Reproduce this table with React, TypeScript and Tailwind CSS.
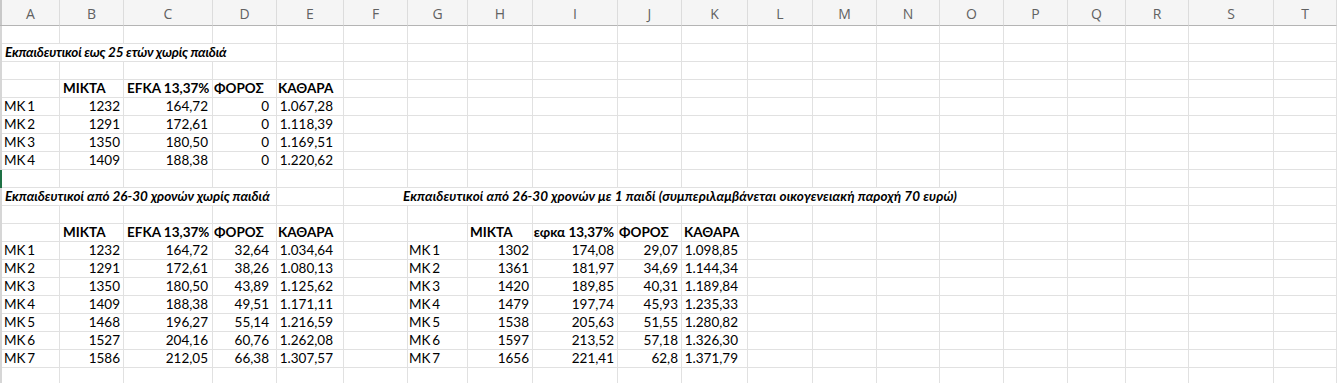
import React from 'react'

type Cell = { span?: number; text?: string; cls?: string }

const letters = ['A', 'B', 'C', 'D', 'E', 'F', 'G', 'H', 'I', 'J', 'K', 'L', 'M', 'N', 'O', 'P', 'Q', 'R', 'S', 'T']

const sec1 = [
  ['ΜΚ\u20091', '1232', '164,72', '0', '1.067,28'],
  ['ΜΚ\u20092', '1291', '172,61', '0', '1.118,39'],
  ['ΜΚ\u20093', '1350', '180,50', '0', '1.169,51'],
  ['ΜΚ\u20094', '1409', '188,38', '0', '1.220,62'],
]

const sec2 = [
  ['ΜΚ\u20091', '1232', '164,72', '32,64', '1.034,64'],
  ['ΜΚ\u20092', '1291', '172,61', '38,26', '1.080,13'],
  ['ΜΚ\u20093', '1350', '180,50', '43,89', '1.125,62'],
  ['ΜΚ\u20094', '1409', '188,38', '49,51', '1.171,11'],
  ['ΜΚ\u20095', '1468', '196,27', '55,14', '1.216,59'],
  ['ΜΚ\u20096', '1527', '204,16', '60,76', '1.262,08'],
  ['ΜΚ\u20097', '1586', '212,05', '66,38', '1.307,57'],
]

const sec3 = [
  ['ΜΚ\u20091', '1302', '174,08', '29,07', '1.098,85'],
  ['ΜΚ\u20092', '1361', '181,97', '34,69', '1.144,34'],
  ['ΜΚ\u20093', '1420', '189,85', '40,31', '1.189,84'],
  ['ΜΚ\u20094', '1479', '197,74', '45,93', '1.235,33'],
  ['ΜΚ\u20095', '1538', '205,63', '51,55', '1.280,82'],
  ['ΜΚ\u20096', '1597', '213,52', '57,18', '1.326,30'],
  ['ΜΚ\u20097', '1656', '221,41', '62,8', '1.371,79'],
]

// right padding per column so the numbers land where excel put them
const leftNums = ['pl-[2px]', 'pr-[3px]', 'pr-[4px]', 'pr-[7px]', 'pr-[10px]']
const rightNums = ['pl-[1px]', 'pr-[3px]', 'pr-[3px]', 'pr-[3px]', 'pr-[9px]']

function buildRow(entries: Record<number, Cell>): (Cell & { col: number })[] {
  const out: (Cell & { col: number })[] = []
  let c = 0
  while (c < 20) {
    const e = entries[c] || {}
    out.push({ ...e, col: c })
    c += e.span || 1
  }
  return out
}

function dataRow(start: number, vals: string[], pads: string[]) {
  const r: Record<number, Cell> = {}
  vals.forEach((v, i) => {
    r[start + i] = { text: v, cls: i === 0 ? 'justify-start ' + pads[i] : 'justify-end ' + pads[i] }
  })
  return r
}

const title = 'font-bold italic justify-start'

const rows: Record<number, Cell>[] = [
  {},
  { 0: { span: 4, text: 'Εκπαιδευτικοί εως 25 ετών χωρίς παιδιά', cls: title + ' pl-[3px] tracking-[-0.2px]' } },
  {},
  {
    1: { text: 'ΜΙΚΤΑ', cls: 'font-bold justify-start pl-[3px]' },
    2: { text: 'EFKA 13,37%', cls: 'font-bold justify-start pl-[3px]' },
    3: { text: 'ΦΟΡΟΣ', cls: 'font-bold justify-start pl-[1px]' },
    4: { text: 'ΚΑΘΑΡΑ', cls: 'font-bold justify-start pl-[1px]' },
  },
  ...sec1.map((v) => dataRow(0, v, leftNums)),
  {},
  {
    0: { span: 4, text: 'Εκπαιδευτικοί από 26-30 χρονών χωρίς παιδιά', cls: title + ' pl-[3px]' },
    5: {
      span: 10,
      text: 'Εκπαιδευτικοί από 26-30 χρονών με 1 παιδί (συμπεριλαμβάνεται οικογενειακή παροχή 70 ευρώ)',
      cls: title + ' pl-[59px] tracking-[0.1px]',
    },
  },
  {},
  {
    1: { text: 'ΜΙΚΤΑ', cls: 'font-bold justify-start pl-[3px]' },
    2: { text: 'EFKA 13,37%', cls: 'font-bold justify-start pl-[3px]' },
    3: { text: 'ΦΟΡΟΣ', cls: 'font-bold justify-start pl-[1px]' },
    4: { text: 'ΚΑΘΑΡΑ', cls: 'font-bold justify-start pl-[1px]' },
    7: { text: 'ΜΙΚΤΑ', cls: 'font-bold justify-start pl-[2px]' },
    8: { text: 'εφκα 13,37%', cls: 'font-bold justify-end pr-[3px]' },
    9: { text: 'ΦΟΡΟΣ', cls: 'font-bold justify-start pl-[1px]' },
    10: { text: 'ΚΑΘΑΡΑ', cls: 'font-bold justify-start pl-[2px]' },
  },
  ...sec2.map((v, i) => ({ ...dataRow(0, v, leftNums), ...dataRow(6, sec3[i], rightNums) })),
  {},
]

const spanCls: Record<number, string> = {
  1: 'col-span-1',
  4: 'col-span-4',
  10: 'col-span-10',
}

export default function App() {
  return (
    <div
      className="w-[1337px] h-[383px] overflow-hidden bg-white text-[13.5px] text-black"
      style={{ fontFamily: 'Lato, "Noto Sans", sans-serif' }}
    >
      <div className="grid grid-cols-[2px_58px_64px_89px_64px_67px_64px_60px_65px_85px_64px_66px_65px_64px_63px_64px_64px_58px_63px_85px_1fr]">
        {/* column headers */}
        <div className="h-[26px] bg-[#c8c8c8] border-b border-[#b4b4b4]" />
        {letters.map((l) => (
          <div
            key={l}
            className="h-[26px] bg-[#f5f5f5] border-b border-r border-b-[#b4b4b4] border-r-[#dcdcdc] flex items-center justify-center text-[#616161] text-[14px] pt-[2px]"
            style={{ fontFamily: '"Open Sans", sans-serif' }}
          >
            {l}
          </div>
        ))}

        {rows.map((entries, ri) => (
          <React.Fragment key={ri}>
            <div className={ri === 8 ? 'h-[18px] bg-[#1e7145]' : 'h-[18px] bg-[#d6d6d6]'} />
            {buildRow(entries).map((c) => (
              <div
                key={c.col}
                className={`h-[18px] flex items-center whitespace-nowrap overflow-visible border-b border-r border-[#e1e1e1] leading-none ${spanCls[c.span || 1]} ${c.cls || ''}`}
              >
                {c.text}
              </div>
            ))}
          </React.Fragment>
        ))}
      </div>
    </div>
  )
}
